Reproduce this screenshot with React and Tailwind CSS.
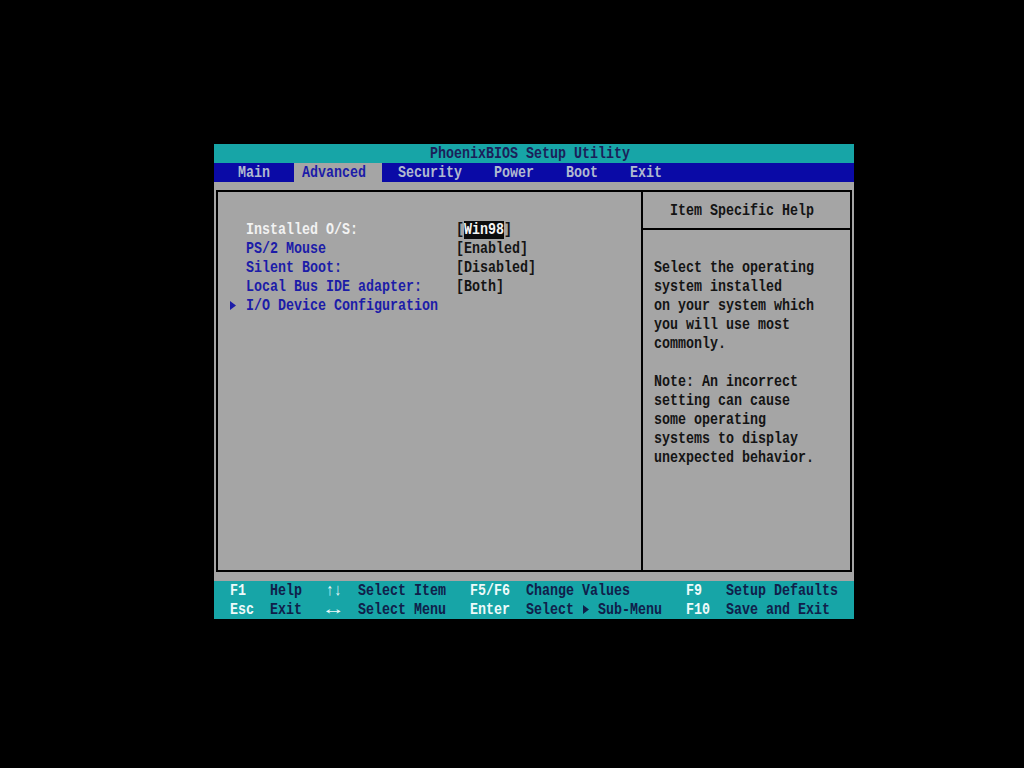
import React from "react";

// Text-mode glyphs: 8px cells, stretched vertically like a VGA bitmap font
function T({ children, className = "" }) {
  return (
    <span className={"inline-block origin-center scale-y-[1.25] whitespace-pre " + className}>
      {children}
    </span>
  );
}

function Tri({ className = "" }) {
  return (
    <svg width="6" height="9" viewBox="0 0 6 9" className={className}>
      <path d="M0 0 L6 4.5 L0 9 Z" fill="currentColor" />
    </svg>
  );
}

const items = [
  { label: "Installed O/S:", value: "win98", selected: true },
  { label: "PS/2 Mouse", value: "[Enabled]" },
  { label: "Silent Boot:", value: "[Disabled]" },
  { label: "Local Bus IDE adapter:", value: "[Both]" },
  { label: "I/O Device Configuration", sub: true },
];

const help = [
  "Select the operating",
  "system installed",
  "on your system which",
  "you will use most",
  "commonly.",
  "",
  "Note: An incorrect",
  "setting can cause",
  "some operating",
  "systems to display",
  "unexpected behavior.",
];

export default function App() {
  return (
    <div className="w-[1024px] h-[768px] bg-black pt-[144px] pl-[214px] font-['Liberation_Mono','DejaVu_Sans_Mono',monospace] text-[13.33px] font-bold leading-[19px]">
      <div className="w-[640px] flex flex-col">
        {/* Title bar */}
        <div className="h-[19px] bg-[#17a5a7] pl-[216px] flex items-center text-[#1b1f5a]">
          <T>PhoenixBIOS Setup Utility</T>
        </div>

        {/* Menu bar */}
        <div className="h-[19px] bg-[#0a0aa6] flex items-center pl-[24px] text-[#b0bad0]">
          <span className="w-[56px]"><T>Main</T></span>
          <span className="w-[88px] h-full bg-[#a5a5a5] pl-[8px] flex items-center text-[#1c1ca8]">
            <T>Advanced</T>
          </span>
          <span className="w-[96px] ml-[16px]"><T>Security</T></span>
          <span className="w-[72px]"><T>Power</T></span>
          <span className="w-[64px]"><T>Boot</T></span>
          <span><T>Exit</T></span>
        </div>

        {/* Main panel */}
        <div className="h-[399px] bg-[#a5a5a5] pt-[8px] pl-[2px]">
          <div className="w-[636px] h-[382px] border-2 border-black flex">
            <div className="w-[423px] pt-[28px] flex flex-col">
              {items.map((it) => (
                <div key={it.label} className="h-[19px] flex items-center pl-[12px]">
                  <span className="w-[16px] flex items-center text-[#1c1ca8]">
                    {it.sub ? <Tri /> : null}
                  </span>
                  <span
                    className={
                      it.selected
                        ? "w-[210px] text-[#f2f2f2]"
                        : it.sub
                        ? "text-[#1c1ca8]"
                        : "w-[210px] text-[#1c1ca8]"
                    }
                  >
                    <T>{it.label}</T>
                  </span>
                  {it.value === "win98" ? (
                    <span className="flex items-center text-[#141414]">
                      <T>[</T>
                      <span className="h-[18px] bg-[#0c0c0c] text-[#f4f4f4] flex items-center">
                        <T>Win98</T>
                      </span>
                      <T>]</T>
                    </span>
                  ) : it.value ? (
                    <span className="text-[#141414]"><T>{it.value}</T></span>
                  ) : null}
                </div>
              ))}
            </div>

            <div className="flex-1 border-l-2 border-black flex flex-col">
              <div className="h-[38px] border-b-2 border-black pl-[27px] flex items-center text-[#141414]">
                <T>Item Specific Help</T>
              </div>
              <div className="pt-[28px] pl-[11px] flex flex-col text-[#141414]">
                {help.map((line, i) => (
                  <div key={i} className="h-[19px] flex items-center">
                    <T>{line}</T>
                  </div>
                ))}
              </div>
            </div>
          </div>
        </div>

        {/* Key legend */}
        <div className="bg-[#17a5a7] pl-[16px] flex flex-col">
          <div className="h-[19px] flex items-center">
            <span className="w-[40px] text-[#eefafa]"><T>F1</T></span>
            <span className="w-[56px] text-[#10204a]"><T>Help</T></span>
            <span className="w-[32px] text-[#eefafa]"><T>↑↓</T></span>
            <span className="w-[112px] text-[#10204a]"><T>Select Item</T></span>
            <span className="w-[56px] text-[#eefafa]"><T>F5/F6</T></span>
            <span className="w-[160px] text-[#10204a]"><T>Change Values</T></span>
            <span className="w-[40px] text-[#eefafa]"><T>F9</T></span>
            <span className="text-[#10204a]"><T>Setup Defaults</T></span>
          </div>
          <div className="h-[19px] flex items-center">
            <span className="w-[32px] text-[#eefafa]"><T>Esc</T></span>
            <span className="w-[8px]" />
            <span className="w-[56px] text-[#10204a]"><T>Exit</T></span>
            <span className="w-[32px] text-[#eefafa]">
              <span className="inline-block origin-left scale-x-[1.8]"><T>↔</T></span>
            </span>
            <span className="w-[112px] text-[#10204a]"><T>Select Menu</T></span>
            <span className="w-[56px] text-[#eefafa]"><T>Enter</T></span>
            <span className="w-[160px] flex items-center text-[#10204a]">
              <T>Select </T>
              <Tri className="mx-[1px]" />
              <T> Sub-Menu</T>
            </span>
            <span className="w-[40px] text-[#eefafa]"><T>F10</T></span>
            <span className="text-[#10204a]"><T>Save and Exit</T></span>
          </div>
        </div>
      </div>
    </div>
  );
}
